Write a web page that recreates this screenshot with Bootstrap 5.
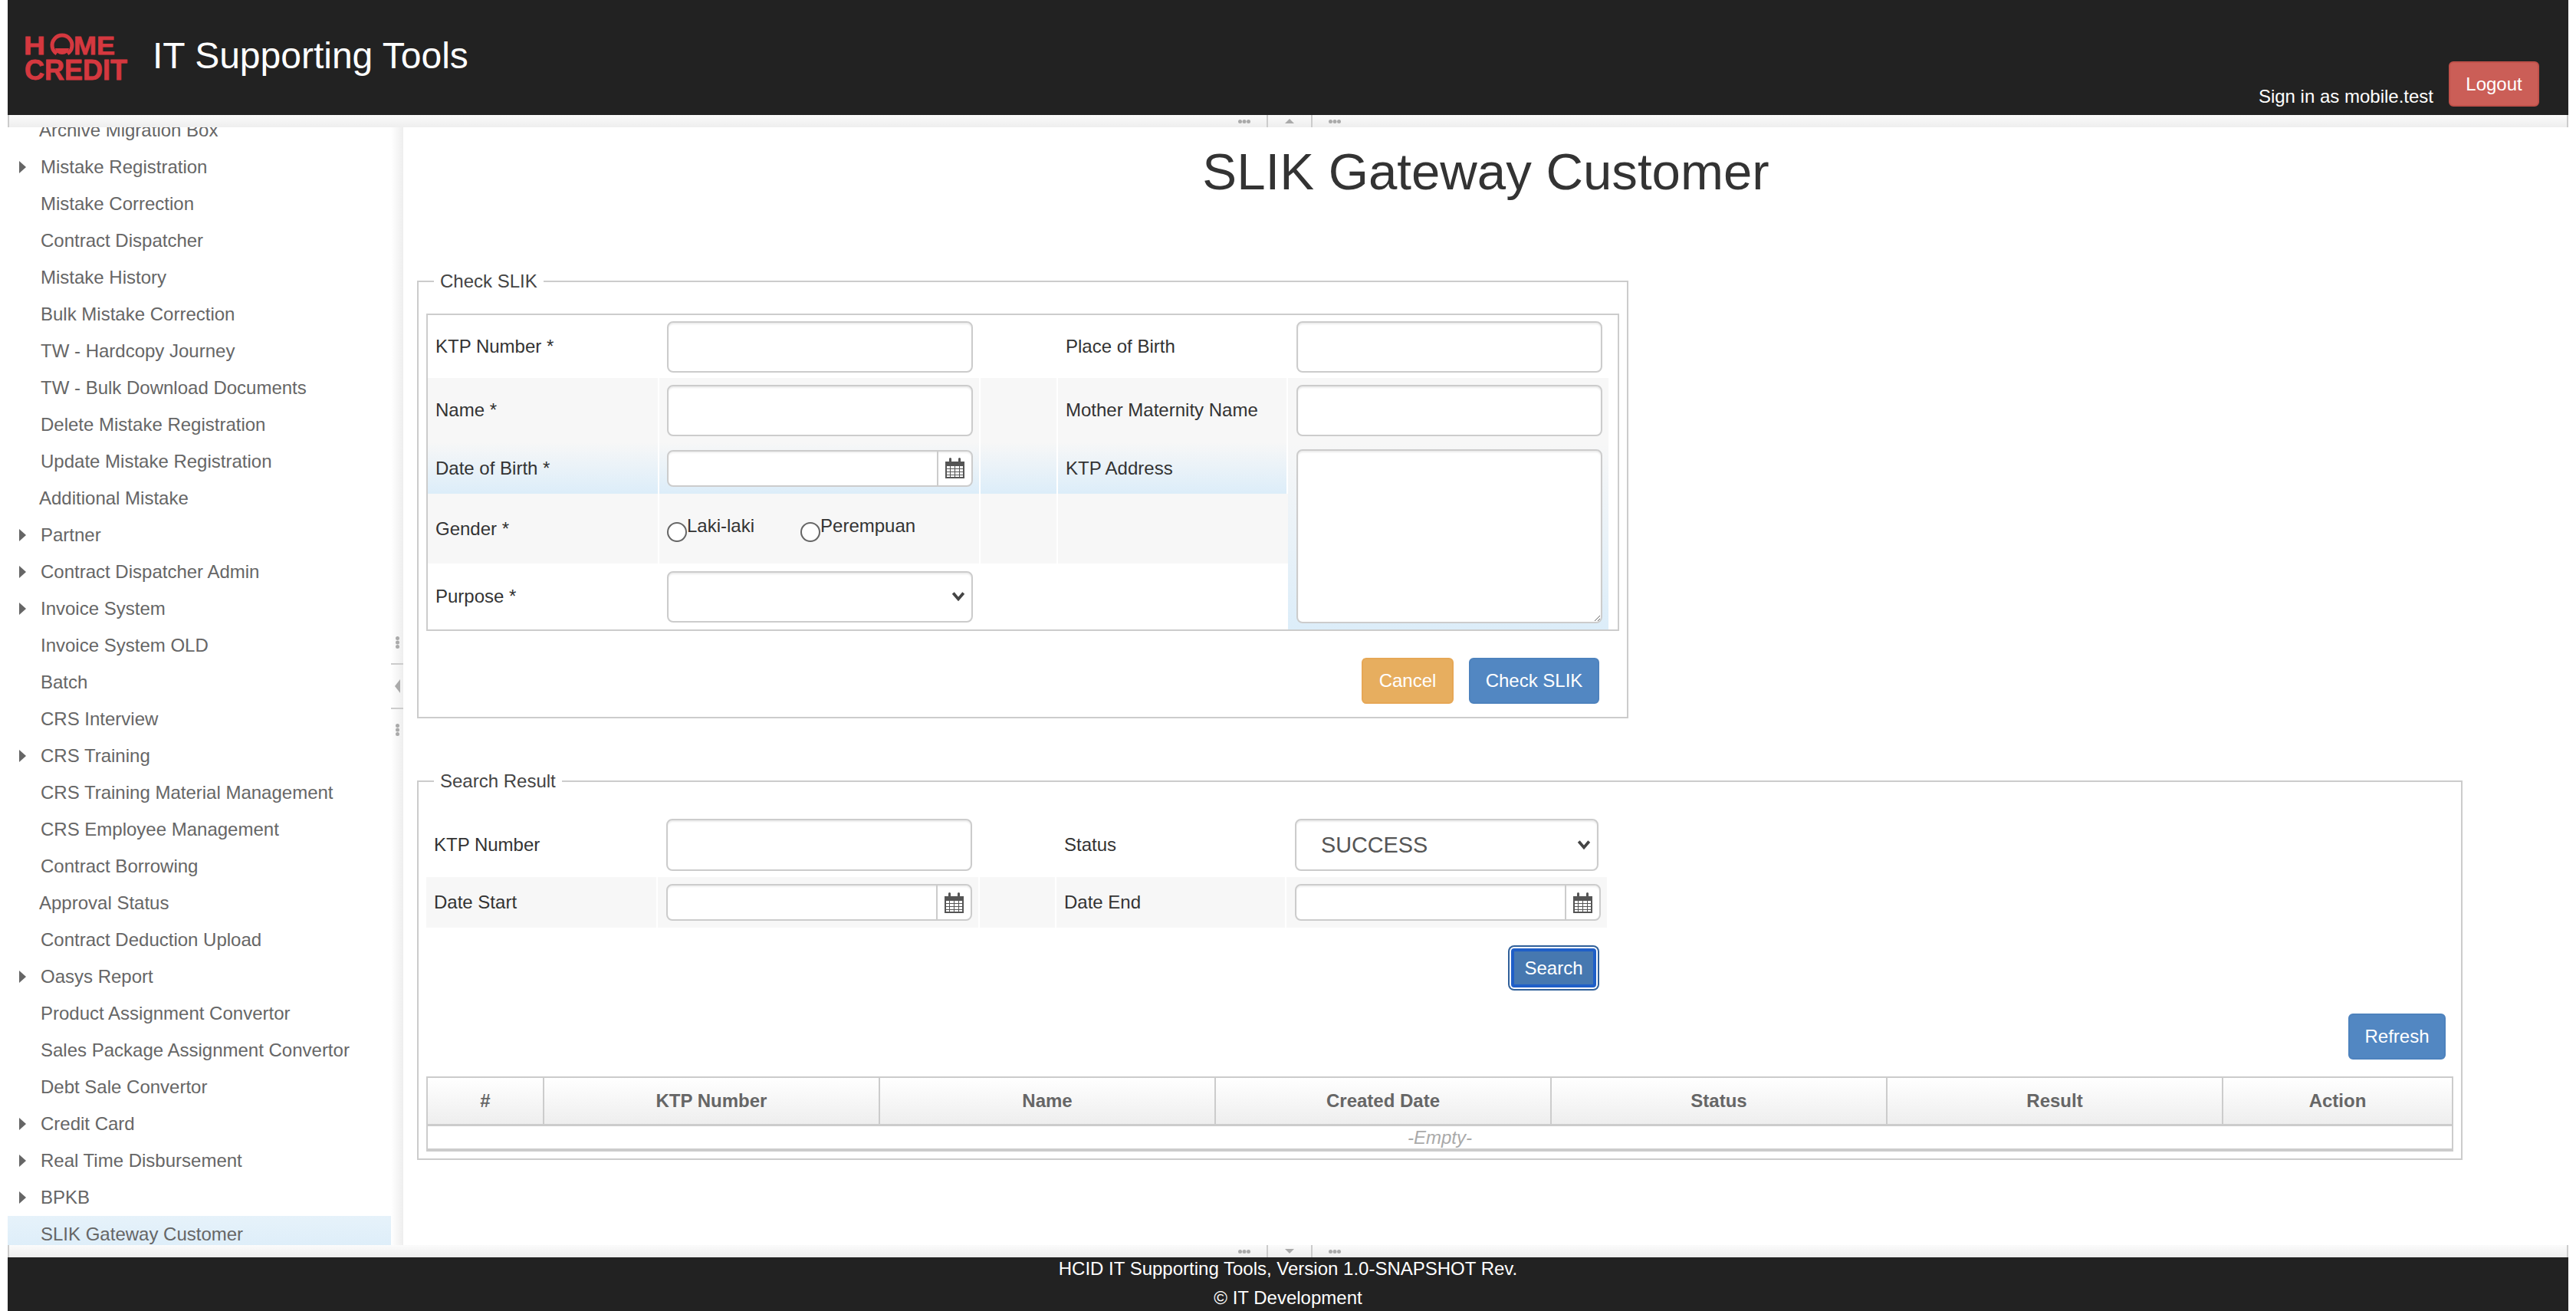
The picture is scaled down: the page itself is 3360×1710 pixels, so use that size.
<!DOCTYPE html>
<html lang="en"><head><meta charset="utf-8"><title>SLIK Gateway Customer</title>
<link rel="stylesheet" href="https://cdn.jsdelivr.net/npm/bootstrap@5.3.0/dist/css/bootstrap.min.css">
<style>
html,body{height:100%}
body{font-family:"Liberation Sans",Arial,sans-serif;font-size:24px;color:#333;background:#fff;padding:0 10px;overflow:hidden}
.shell{height:1710px}
.topbar{height:150px;background:#222;color:#fff;flex:none}
.logo{margin-left:23px;margin-top:-1px;flex:none;overflow:visible}
.apptitle{font-size:48px;line-height:1;margin:0 0 4px 32px;font-weight:400}
.signin{margin-right:20px;margin-bottom:10px;line-height:28px}
.btn-out{width:118px;height:59px;margin:0 38px 11px 0;background:#cb5e57;border:2px solid #c1514a;color:#fff;font-size:24px;border-radius:6px;padding:0}
.btn-out:hover{background:#cb5e57;color:#fff;border-color:#c1514a}
.hsplit{height:16px;flex:none;background:linear-gradient(#fbfbfb,#eeeeee);border-left:2px solid #ccc;border-right:2px solid #ccc;padding-left:4px}
.hsplit .sepbox{width:60px;height:16px;border-left:2px solid #ccc;border-right:2px solid #ccc;margin:0 21px}
.gutter{width:16px;flex:none;background:linear-gradient(to right,#fff,#eeeeee)}
.gutter .sepbox{height:60px;width:16px;border-top:2px solid #ccc;border-bottom:2px solid #ccc;margin:19px 0}
.sidemenu{width:500px;flex:none;overflow:hidden;font-size:24px;color:#666}
.sidemenu ul{margin:-20px 0 0}
.sidemenu li{height:48px;padding-left:15px;line-height:48px;white-space:nowrap}
.sidemenu li.current{background:linear-gradient(#e6f2fa,#dcedf9)}
.arrowslot{width:28px;flex:none}
.tri{display:block;width:0;height:0;border-left:9px solid #666;border-top:8px solid transparent;border-bottom:8px solid transparent}
.shift{margin-left:-2px}
.pagebody{padding-left:18px;overflow:hidden;min-width:0}
.pagetitle{font-size:67.2px;line-height:80px;font-weight:400;color:#333;text-align:center;margin:18px 0 86px -18px}
.fset{border:2px solid #ccc;margin:0;padding:25px 10px 17px;min-width:0;box-sizing:border-box}
.fset legend{float:none;width:auto;font-size:24px;line-height:34px;padding:0 8px;margin:0 0 0 10px;color:#444}
.fs-a{width:1580px}
.fs-b{width:2668px;margin-top:65px;padding:24px 10px 9px}
.frmbox{border:2px solid #ccc;width:1556px}
.frmtab{table-layout:fixed;border-collapse:separate;border-spacing:0}
.frmtab td{padding:0 0 0 10px;vertical-align:middle;border-right:2px solid #fff;color:#333;line-height:28px}
.frmtab td.fld{padding-left:10px}
.frmtab td:last-child{border-right:0}
.frmtab td.fld5{padding-left:11px}
.band{background:#f7f7f7}
.hot{background:linear-gradient(#f7f7f7,#dcedf9)}
.tx{display:block;border:2px solid #ccc;border-radius:8px;box-shadow:inset 0 2px 2px rgba(0,0,0,.08);background:#fff}
input.tx,select.tx{padding:0 32px;font-size:28.8px;color:#555}
.w399{width:399px}
.h67{height:67px}
select.tx{appearance:none;background-image:url("data:image/svg+xml,%3Csvg xmlns='http://www.w3.org/2000/svg' viewBox='0 0 16 12'%3E%3Cpath d='M2 2l6 7 6-7' fill='none' stroke='%23444' stroke-width='3.4'/%3E%3C/svg%3E");background-repeat:no-repeat;background-position:right 8px center;background-size:18px 14px}
.datebox{height:48px;border:2px solid #ccc;border-radius:8px;background:#fff;box-shadow:inset 0 2px 2px rgba(0,0,0,.06);overflow:hidden}
.datebox input{border:0;outline:0;flex:1;min-width:0;background:transparent}
.datebox .cal{width:45px;flex:none;border-left:2px solid #ccc}
.ta{width:399px;height:227px;resize:both;outline:0}
.rad{appearance:none;width:26px;height:26px;border:2px solid #666;border-radius:50%;background:#fff;margin:8px 0 0;flex:none}
.gapradio{margin-left:60px}
.radtxt{margin-top:-8px;line-height:28px}
.act{height:60px;font-size:24px;border-radius:6px;color:#fff;padding:0;border-width:2px}
.act-w{width:120px;background:#e7ae5f;border-color:#e6a755}
.act-p{width:170px;background:#5287c2;border-color:#4d82bd}
.act-r{width:127px;background:#5287c2;border-color:#4d82bd}
.act-s{width:111px;height:51px;margin:4px;background:#4678b0;color:#fff;font-size:24px;border:4px solid #1f5fc8;border-radius:4px;padding:0;box-shadow:0 0 0 2px #fff,0 0 0 4px #30609a}
.act-s:hover{background:#4678b0;color:#fff;border-color:#1f5fc8}
.btnrow-a{margin:35px 26px 0 0;gap:20px}
.btnrow-b{width:1530px;margin-top:23px}
.btnrow-c{margin:30px 10px 22px 0}
.gridtab{width:2644px;table-layout:fixed;border-collapse:separate;border-spacing:0;border:2px solid #ccc;border-bottom-width:4px}
.gridtab th{height:63px;text-align:center;color:#666;font-weight:700;font-size:24px;background:linear-gradient(#fff,#eee);border-right:2px solid #ccc;border-bottom:3px solid #ccc;padding:0}
.gridtab th:last-child{border-right:0}
.gridtab td{height:29px;padding:0;text-align:center;font-style:italic;color:#aaa;font-size:24px;line-height:29px;background:#fff}
.botbar{height:70px;background:#222;color:#fff;text-align:center;font-size:24px;line-height:38px;flex:none;overflow:hidden}
.botbar p{margin:0}
.botbar p:first-child{margin-top:-4px}
.midwrap{min-height:0}
</style></head>
<body>
<div class="shell d-flex flex-column">
<header class="topbar d-flex">
 <div class="d-flex align-items-center flex-grow-1">
  <svg class="logo" width="134" height="60" viewBox="0 0 134 60" role="img" aria-label="Home Credit">
   <g fill="#d5383f" font-family="'Liberation Sans',Arial,sans-serif" font-weight="700" stroke="#d5383f" stroke-width=".8">
    <text x="-2" y="26" font-size="34" textLength="28" lengthAdjust="spacingAndGlyphs">H</text>
    <path d="M41 25A13 13 0 1 1 55 25" fill="none" stroke-width="5"/>
    <path d="M39 18h18a9 8 0 0 1-18 0z" stroke="none"/>
    <text x="63" y="26" font-size="34" textLength="54" lengthAdjust="spacingAndGlyphs">ME</text>
    <text x="-1" y="59" font-size="36" textLength="134" lengthAdjust="spacingAndGlyphs">CREDIT</text>
   </g>
  </svg>
  <h1 class="apptitle">IT Supporting Tools</h1>
 </div>
 <div class="d-flex align-items-end">
  <span class="signin">Sign in as mobile.test</span>
  <button type="button" class="btn btn-out">Logout</button>
 </div>
</header>

<div class="hsplit d-flex justify-content-center align-items-center">
 <svg width="16" height="5" viewBox="0 0 16 5"><g fill="#aaa"><circle cx="2.5" cy="2.5" r="2.5"/><circle cx="8" cy="2.5" r="2.5"/><circle cx="13.5" cy="2.5" r="2.5"/></g></svg>
 <div class="sepbox d-flex justify-content-center align-items-center"><svg width="12" height="6" viewBox="0 0 12 6"><path d="M6 0l6 6H0z" fill="#aaa"/></svg></div>
 <svg width="16" height="5" viewBox="0 0 16 5"><g fill="#aaa"><circle cx="2.5" cy="2.5" r="2.5"/><circle cx="8" cy="2.5" r="2.5"/><circle cx="13.5" cy="2.5" r="2.5"/></g></svg>
</div>

<div class="midwrap d-flex flex-grow-1">
 <nav class="sidemenu">
  <ul class="list-unstyled">
   <li class="d-flex align-items-center"><span class="arrowslot"></span><span class="shift">Archive Migration Box</span></li>
   <li class="d-flex align-items-center"><span class="arrowslot"><i class="tri"></i></span><span>Mistake Registration</span></li>
   <li class="d-flex align-items-center"><span class="arrowslot"></span><span>Mistake Correction</span></li>
   <li class="d-flex align-items-center"><span class="arrowslot"></span><span>Contract Dispatcher</span></li>
   <li class="d-flex align-items-center"><span class="arrowslot"></span><span>Mistake History</span></li>
   <li class="d-flex align-items-center"><span class="arrowslot"></span><span>Bulk Mistake Correction</span></li>
   <li class="d-flex align-items-center"><span class="arrowslot"></span><span>TW - Hardcopy Journey</span></li>
   <li class="d-flex align-items-center"><span class="arrowslot"></span><span>TW - Bulk Download Documents</span></li>
   <li class="d-flex align-items-center"><span class="arrowslot"></span><span>Delete Mistake Registration</span></li>
   <li class="d-flex align-items-center"><span class="arrowslot"></span><span>Update Mistake Registration</span></li>
   <li class="d-flex align-items-center"><span class="arrowslot"></span><span class="shift">Additional Mistake</span></li>
   <li class="d-flex align-items-center"><span class="arrowslot"><i class="tri"></i></span><span>Partner</span></li>
   <li class="d-flex align-items-center"><span class="arrowslot"><i class="tri"></i></span><span>Contract Dispatcher Admin</span></li>
   <li class="d-flex align-items-center"><span class="arrowslot"><i class="tri"></i></span><span>Invoice System</span></li>
   <li class="d-flex align-items-center"><span class="arrowslot"></span><span>Invoice System OLD</span></li>
   <li class="d-flex align-items-center"><span class="arrowslot"></span><span>Batch</span></li>
   <li class="d-flex align-items-center"><span class="arrowslot"></span><span>CRS Interview</span></li>
   <li class="d-flex align-items-center"><span class="arrowslot"><i class="tri"></i></span><span>CRS Training</span></li>
   <li class="d-flex align-items-center"><span class="arrowslot"></span><span>CRS Training Material Management</span></li>
   <li class="d-flex align-items-center"><span class="arrowslot"></span><span>CRS Employee Management</span></li>
   <li class="d-flex align-items-center"><span class="arrowslot"></span><span>Contract Borrowing</span></li>
   <li class="d-flex align-items-center"><span class="arrowslot"></span><span class="shift">Approval Status</span></li>
   <li class="d-flex align-items-center"><span class="arrowslot"></span><span>Contract Deduction Upload</span></li>
   <li class="d-flex align-items-center"><span class="arrowslot"><i class="tri"></i></span><span>Oasys Report</span></li>
   <li class="d-flex align-items-center"><span class="arrowslot"></span><span>Product Assignment Convertor</span></li>
   <li class="d-flex align-items-center"><span class="arrowslot"></span><span>Sales Package Assignment Convertor</span></li>
   <li class="d-flex align-items-center"><span class="arrowslot"></span><span>Debt Sale Convertor</span></li>
   <li class="d-flex align-items-center"><span class="arrowslot"><i class="tri"></i></span><span>Credit Card</span></li>
   <li class="d-flex align-items-center"><span class="arrowslot"><i class="tri"></i></span><span>Real Time Disbursement</span></li>
   <li class="d-flex align-items-center"><span class="arrowslot"><i class="tri"></i></span><span>BPKB</span></li>
   <li class="d-flex align-items-center current"><span class="arrowslot"></span><span>SLIK Gateway Customer</span></li>
  </ul>
 </nav>
 <div class="gutter d-flex flex-column justify-content-center align-items-center">
  <svg width="5" height="16" viewBox="0 0 5 16"><g fill="#aaa"><circle cx="2.5" cy="2.5" r="2.5"/><circle cx="2.5" cy="8" r="2.5"/><circle cx="2.5" cy="13.5" r="2.5"/></g></svg>
  <div class="sepbox d-flex justify-content-center align-items-center"><svg width="7" height="18" viewBox="0 0 7 18"><path d="M0 9l7-9v18z" fill="#aaa"/></svg></div>
  <svg width="5" height="16" viewBox="0 0 5 16"><g fill="#aaa"><circle cx="2.5" cy="2.5" r="2.5"/><circle cx="2.5" cy="8" r="2.5"/><circle cx="2.5" cy="13.5" r="2.5"/></g></svg>
 </div>

 <main class="pagebody flex-grow-1">
  <h2 class="pagetitle">SLIK Gateway Customer</h2>

  <fieldset class="fset fs-a">
   <legend>Check SLIK</legend>
   <div class="frmbox">
    <table class="frmtab" style="width:1540px">
     <colgroup><col style="width:302px"><col style="width:419px"><col style="width:101px"><col style="width:300px"><col style="width:418px"></colgroup>
     <tr style="height:82px">
      <td>KTP Number *</td>
      <td class="fld"><input type="text" class="tx w399 h67" aria-label="KTP Number"></td>
      <td></td>
      <td>Place of Birth</td>
      <td class="fld5"><input type="text" class="tx w399 h67" aria-label="Place of Birth"></td>
     </tr>
     <tr style="height:84px">
      <td class="band">Name *</td>
      <td class="band fld"><input type="text" class="tx w399 h67" aria-label="Name"></td>
      <td class="band"></td>
      <td class="band">Mother Maternity Name</td>
      <td class="band fld5"><input type="text" class="tx w399 h67" aria-label="Mother Maternity Name"></td>
     </tr>
     <tr style="height:67px">
      <td class="hot">Date of Birth *</td>
      <td class="hot fld">
       <div class="datebox d-flex w399"><input type="text" aria-label="Date of Birth">
        <div class="cal d-flex align-items-center justify-content-center"><svg width="27" height="27" viewBox="0 0 27 27"><g fill="#555"><path d="M1 5h25v22H1z"/><rect x="6" y="0" width="3" height="8" rx="1.5"/><rect x="18" y="0" width="3" height="8" rx="1.5"/></g><g fill="#fff"><rect x="3" y="11" width="4" height="3"/><rect x="8" y="11" width="5" height="3"/><rect x="14" y="11" width="5" height="3"/><rect x="20" y="11" width="4" height="3"/><rect x="3" y="15" width="4" height="3"/><rect x="8" y="15" width="5" height="3"/><rect x="14" y="15" width="5" height="3"/><rect x="20" y="15" width="4" height="3"/><rect x="3" y="19" width="4" height="3"/><rect x="8" y="19" width="5" height="3"/><rect x="14" y="19" width="5" height="3"/><rect x="20" y="19" width="4" height="3"/><rect x="3" y="23" width="4" height="2"/><rect x="8" y="23" width="5" height="2"/><rect x="14" y="23" width="5" height="2"/><rect x="20" y="23" width="4" height="2"/></g></svg></div>
       </div>
      </td>
      <td class="hot"></td>
      <td class="hot">KTP Address</td>
      <td class="hot fld5" rowspan="3"><textarea class="tx ta" aria-label="KTP Address"></textarea></td>
     </tr>
     <tr style="height:91px">
      <td class="band">Gender *</td>
      <td class="band fld">
       <div class="d-flex align-items-center">
        <input type="radio" name="g" class="rad" aria-label="Laki-laki"><span class="radtxt">Laki-laki</span>
        <input type="radio" name="g" class="rad gapradio" aria-label="Perempuan"><span class="radtxt">Perempuan</span>
       </div>
      </td>
      <td class="band"></td>
      <td class="band"></td>
     </tr>
     <tr style="height:86px">
      <td>Purpose *</td>
      <td class="fld"><select class="tx w399 h67" aria-label="Purpose"><option></option></select></td>
      <td></td>
      <td></td>
     </tr>
    </table>
   </div>
   <div class="d-flex justify-content-end btnrow-a">
    <button type="button" class="btn act act-w">Cancel</button>
    <button type="button" class="btn act act-p">Check SLIK</button>
   </div>
  </fieldset>

  <fieldset class="fset fs-b">
   <legend>Search Result</legend>
   <table class="frmtab" style="width:1540px">
    <colgroup><col style="width:302px"><col style="width:420px"><col style="width:100px"><col style="width:300px"><col style="width:418px"></colgroup>
    <tr style="height:84px">
     <td>KTP Number</td>
     <td class="fld5"><input type="text" class="tx w399" style="height:68px" aria-label="KTP Number"></td>
     <td></td>
     <td>Status</td>
     <td class="fld5"><select class="tx" style="width:396px;height:68px" aria-label="Status"><option>SUCCESS</option></select></td>
    </tr>
    <tr style="height:66px">
     <td class="band">Date Start</td>
     <td class="band fld5">
      <div class="datebox d-flex w399"><input type="text" aria-label="Date Start">
       <div class="cal d-flex align-items-center justify-content-center"><svg width="27" height="27" viewBox="0 0 27 27"><g fill="#555"><path d="M1 5h25v22H1z"/><rect x="6" y="0" width="3" height="8" rx="1.5"/><rect x="18" y="0" width="3" height="8" rx="1.5"/></g><g fill="#fff"><rect x="3" y="11" width="4" height="3"/><rect x="8" y="11" width="5" height="3"/><rect x="14" y="11" width="5" height="3"/><rect x="20" y="11" width="4" height="3"/><rect x="3" y="15" width="4" height="3"/><rect x="8" y="15" width="5" height="3"/><rect x="14" y="15" width="5" height="3"/><rect x="20" y="15" width="4" height="3"/><rect x="3" y="19" width="4" height="3"/><rect x="8" y="19" width="5" height="3"/><rect x="14" y="19" width="5" height="3"/><rect x="20" y="19" width="4" height="3"/><rect x="3" y="23" width="4" height="2"/><rect x="8" y="23" width="5" height="2"/><rect x="14" y="23" width="5" height="2"/><rect x="20" y="23" width="4" height="2"/></g></svg></div>
      </div>
     </td>
     <td class="band"></td>
     <td class="band">Date End</td>
     <td class="band fld5">
      <div class="datebox d-flex w399"><input type="text" aria-label="Date End">
       <div class="cal d-flex align-items-center justify-content-center"><svg width="27" height="27" viewBox="0 0 27 27"><g fill="#555"><path d="M1 5h25v22H1z"/><rect x="6" y="0" width="3" height="8" rx="1.5"/><rect x="18" y="0" width="3" height="8" rx="1.5"/></g><g fill="#fff"><rect x="3" y="11" width="4" height="3"/><rect x="8" y="11" width="5" height="3"/><rect x="14" y="11" width="5" height="3"/><rect x="20" y="11" width="4" height="3"/><rect x="3" y="15" width="4" height="3"/><rect x="8" y="15" width="5" height="3"/><rect x="14" y="15" width="5" height="3"/><rect x="20" y="15" width="4" height="3"/><rect x="3" y="19" width="4" height="3"/><rect x="8" y="19" width="5" height="3"/><rect x="14" y="19" width="5" height="3"/><rect x="20" y="19" width="4" height="3"/><rect x="3" y="23" width="4" height="2"/><rect x="8" y="23" width="5" height="2"/><rect x="14" y="23" width="5" height="2"/><rect x="20" y="23" width="4" height="2"/></g></svg></div>
      </div>
     </td>
    </tr>
   </table>
   <div class="d-flex justify-content-end btnrow-b"><button type="button" class="btn act-s">Search</button></div>
   <div class="d-flex justify-content-end btnrow-c"><button type="button" class="btn act act-r">Refresh</button></div>
   <table class="gridtab">
    <colgroup><col style="width:152px"><col style="width:438px"><col style="width:438px"><col style="width:438px"><col style="width:438px"><col style="width:438px"><col style="width:298px"></colgroup>
    <thead><tr><th>#</th><th>KTP Number</th><th>Name</th><th>Created Date</th><th>Status</th><th>Result</th><th>Action</th></tr></thead>
    <tbody><tr><td colspan="7">-Empty-</td></tr></tbody>
   </table>
  </fieldset>
 </main>
</div>

<div class="hsplit d-flex justify-content-center align-items-center">
 <svg width="16" height="5" viewBox="0 0 16 5"><g fill="#aaa"><circle cx="2.5" cy="2.5" r="2.5"/><circle cx="8" cy="2.5" r="2.5"/><circle cx="13.5" cy="2.5" r="2.5"/></g></svg>
 <div class="sepbox d-flex justify-content-center align-items-center"><svg width="12" height="6" viewBox="0 0 12 6"><path d="M6 6L0 0h12z" fill="#aaa"/></svg></div>
 <svg width="16" height="5" viewBox="0 0 16 5"><g fill="#aaa"><circle cx="2.5" cy="2.5" r="2.5"/><circle cx="8" cy="2.5" r="2.5"/><circle cx="13.5" cy="2.5" r="2.5"/></g></svg>
</div>
<footer class="botbar">
 <p>HCID IT Supporting Tools, Version 1.0-SNAPSHOT Rev.</p>
 <p>© IT Development</p>
</footer>
</div>
<script src="https://cdn.jsdelivr.net/npm/bootstrap@5.3.0/dist/js/bootstrap.bundle.min.js"></script>
</body></html>
